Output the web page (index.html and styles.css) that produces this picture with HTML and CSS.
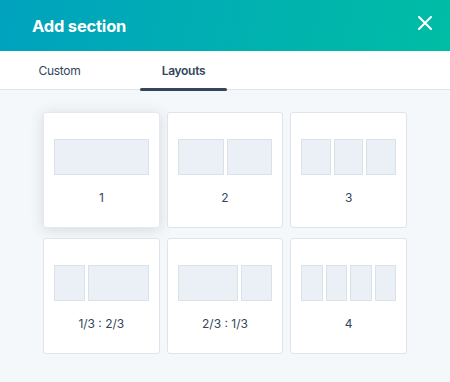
FILE: index.html
```html
<!DOCTYPE html>
<html lang="en">
<head>
    <meta charset="UTF-8">
    <meta name="viewport" content="width=device-width, initial-scale=1.0">
    <title>Add section</title>
    <link rel="stylesheet" href="styles.css">
</head>
<body>
    <div class="modal">
        <header class="modal-header">
            <h1>Add section</h1>
            <button class="close-button" aria-label="Close">
                <svg width="14" height="14" viewBox="0 0 14 14">
                    <path d="M1 1 L13 13 M13 1 L1 13" stroke="#fff" stroke-width="2" stroke-linecap="round"/>
                </svg>
            </button>
        </header>

        <nav class="tabs">
            <button class="tab">Custom</button>
            <button class="tab active">Layouts</button>
        </nav>

        <main class="content">
            <div class="layout-grid">
                <div class="layout-card raised">
                    <div class="preview">
                        <span class="col"></span>
                    </div>
                    <div class="label">1</div>
                </div>
                <div class="layout-card">
                    <div class="preview">
                        <span class="col"></span>
                        <span class="col"></span>
                    </div>
                    <div class="label">2</div>
                </div>
                <div class="layout-card">
                    <div class="preview">
                        <span class="col"></span>
                        <span class="col"></span>
                        <span class="col"></span>
                    </div>
                    <div class="label">3</div>
                </div>
                <div class="layout-card">
                    <div class="preview">
                        <span class="col"></span>
                        <span class="col wide"></span>
                    </div>
                    <div class="label">1/3 : 2/3</div>
                </div>
                <div class="layout-card">
                    <div class="preview">
                        <span class="col wide"></span>
                        <span class="col"></span>
                    </div>
                    <div class="label">2/3 : 1/3</div>
                </div>
                <div class="layout-card">
                    <div class="preview">
                        <span class="col"></span>
                        <span class="col"></span>
                        <span class="col"></span>
                        <span class="col"></span>
                    </div>
                    <div class="label">4</div>
                </div>
            </div>
        </main>
    </div>
</body>
</html>
```

FILE: styles.css
```css
body {
    margin: 0;
    padding: 0;
    font-family: 'Inter', 'Noto Sans', sans-serif;
    color: #33475b;
    background-color: #f5f8fa;
}

.modal {
    width: 450px;
    height: 382px;
    overflow: hidden;
    display: flex;
    flex-direction: column;
}

.modal-header {
    height: 51px;
    flex-shrink: 0;
    display: flex;
    align-items: center;
    justify-content: space-between;
    padding: 0 18px 0 32px;
    background: linear-gradient(100deg, #00a2be 0%, #00bda5 100%);
}

.modal-header h1 {
    margin: 0;
    font-size: 16.5px;
    font-weight: 700;
    color: #fff;
    letter-spacing: -0.2px;
}

.close-button {
    background: none;
    border: none;
    padding: 0;
    width: 14px;
    height: 14px;
    margin-top: -5px;
    cursor: pointer;
}

.tabs {
    height: 38px;
    flex-shrink: 0;
    display: flex;
    gap: 37px;
    padding-left: 16px;
    background-color: #fff;
    border-bottom: 1px solid #dfe3eb;
}

.tab {
    position: relative;
    width: 87px;
    background: none;
    border: none;
    padding: 0;
    font-family: inherit;
    font-size: 12px;
    letter-spacing: -0.3px;
    color: #33475b;
    cursor: pointer;
}

.tab.active {
    font-weight: 600;
}

.tab.active::after {
    content: '';
    position: absolute;
    left: 0;
    right: 0;
    bottom: -2px;
    height: 3px;
    border-radius: 2px;
    background-color: #33475b;
}

.content {
    flex: 1;
    padding: 22px 43px 0;
    background-color: #f5f8fa;
}

.layout-grid {
    display: grid;
    grid-template-columns: repeat(3, 1fr);
    column-gap: 7px;
    row-gap: 10px;
}

.layout-card {
    height: 116px;
    box-sizing: border-box;
    padding: 26px 10px 0;
    background-color: #fff;
    border: 1px solid #dfe3eb;
    border-radius: 3px;
    display: flex;
    flex-direction: column;
    align-items: stretch;
}

.layout-card.raised {
    border-color: #e5e9ef;
    box-shadow: 0 2px 14px rgba(45, 62, 80, 0.16);
}

.preview {
    display: flex;
    gap: 3px;
    height: 36px;
}

.col {
    flex: 1;
    background-color: #eaf0f6;
    border: 1px solid #d9e1ea;
}

.col.wide {
    flex: 2;
}

.label {
    margin-top: 15px;
    text-align: center;
    font-size: 12px;
    line-height: 16px;
}
```
